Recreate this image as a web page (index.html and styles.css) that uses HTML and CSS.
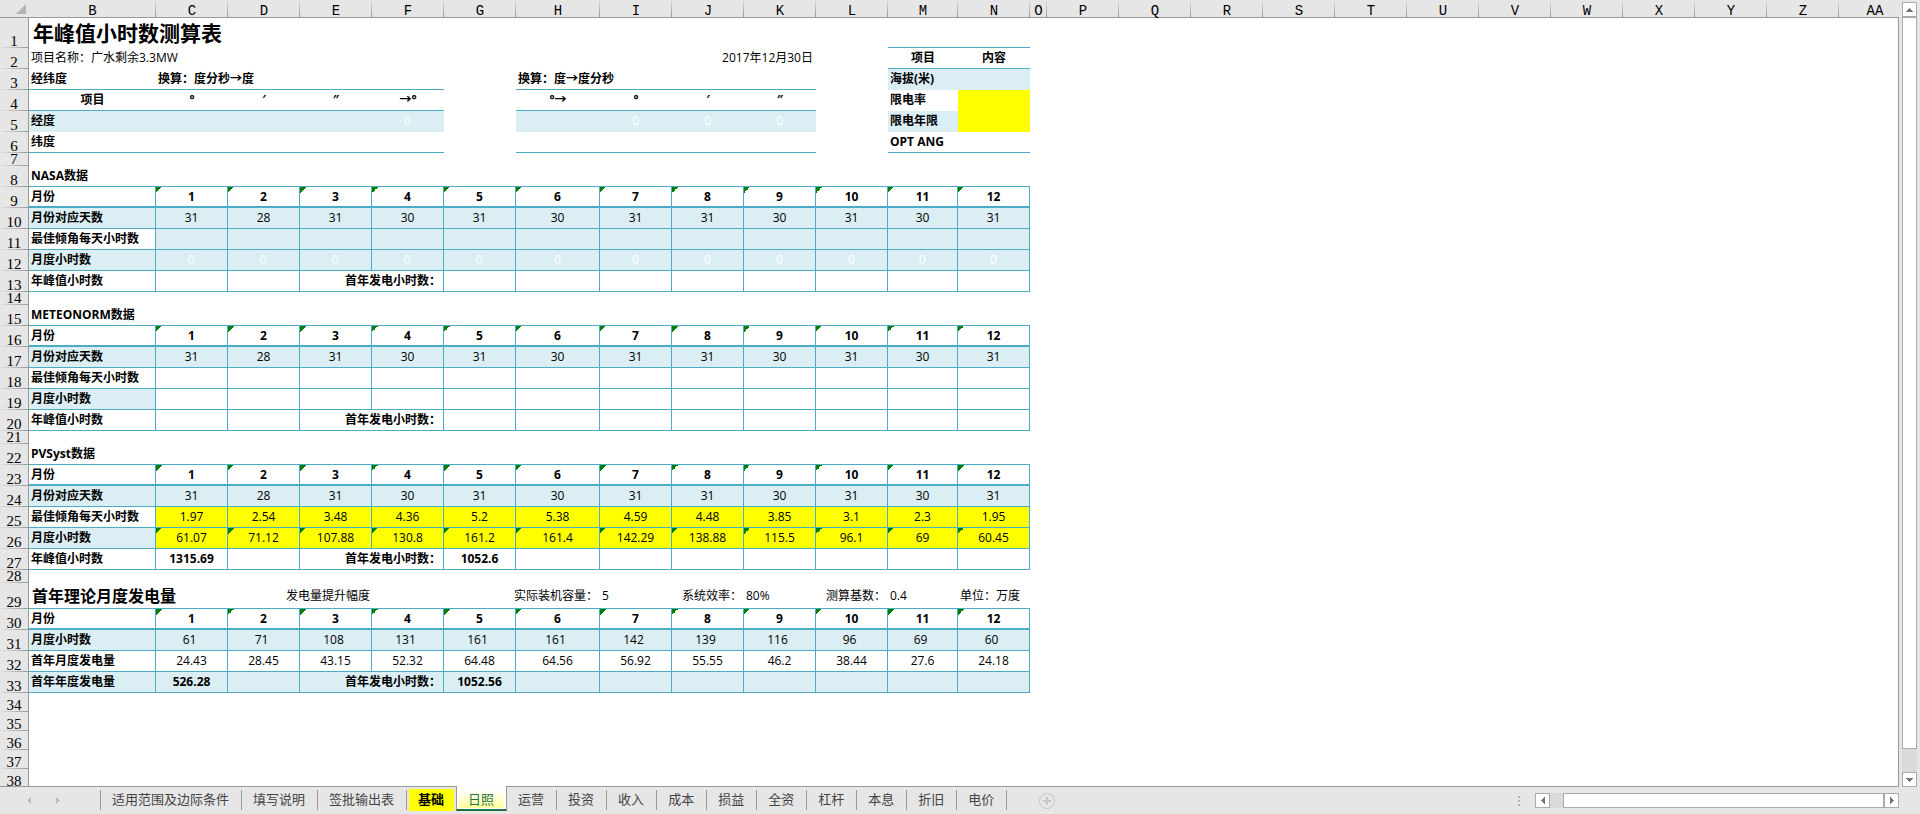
FILE: index.html
```html
<!DOCTYPE html>
<html lang="zh-CN">
<head>
    <meta charset="UTF-8">
    <meta name="viewport" content="width=device-width, initial-scale=1.0">
    <title>年峰值小时数测算表</title>
    <link rel="stylesheet" href="styles.css">
</head>
<body>
    <main class="workbook">
        <div class="sheet">
            <table class="grid">
                <colgroup id="cols"></colgroup>
                <thead><tr id="letters"></tr></thead>
                <tbody id="rows"></tbody>
            </table>
        </div>
        <div class="vscroll">
            <button class="scroll-btn" aria-label="向上滚动"><svg width="7" height="4" viewBox="0 0 7 4"><path d="M3 0h1v1h1v1h1v1h1v1H0V3h1V2h1V1h1z"/></svg></button>
            <div class="vtrack"><div class="vthumb"></div></div>
            <button class="scroll-btn" aria-label="向下滚动"><svg width="7" height="4" viewBox="0 0 7 4"><path d="M0 0h7v1H6v1H5v1H4v1H3V3H2V2H1V1H0z"/></svg></button>
        </div>
    </main>

    <footer class="tabbar">
        <div class="tab-nav">
            <button aria-label="上一个"><svg width="4" height="7" viewBox="0 0 4 7"><path d="M4 0v7L0 3.5z"/></svg></button>
            <button aria-label="下一个"><svg width="4" height="7" viewBox="0 0 4 7"><path d="M0 0v7l4-3.5z"/></svg></button>
        </div>
        <nav class="tabs">
            <button class="tab">适用范围及边际条件</button>
            <button class="tab">填写说明</button>
            <button class="tab">签批输出表</button>
            <button class="tab marked">基础</button>
            <button class="tab active"><span>日照</span></button>
            <button class="tab">运营</button>
            <button class="tab">投资</button>
            <button class="tab">收入</button>
            <button class="tab">成本</button>
            <button class="tab">损益</button>
            <button class="tab">全资</button>
            <button class="tab">杠杆</button>
            <button class="tab">本息</button>
            <button class="tab">折旧</button>
            <button class="tab">电价</button>
        </nav>
        <button class="add" aria-label="新工作表"><svg width="16" height="16" viewBox="0 0 16 16"><circle cx="8" cy="8" r="7.5"/><path d="M4 8h8M8 4v8" stroke-width="2"/></svg></button>
        <div class="hscroll">
            <svg class="grip" width="2" height="10" viewBox="0 0 2 10"><path d="M0 0h2v2H0zM0 4h2v2H0zM0 8h2v2H0z"/></svg>
            <button class="scroll-btn" aria-label="向左滚动"><svg width="4" height="7" viewBox="0 0 4 7"><path d="M4 0v7H3V6H2V5H1V4H0V3h1V2h1V1h1V0z"/></svg></button>
            <div class="htrack"><div class="hthumb"></div></div>
            <button class="scroll-btn" aria-label="向右滚动"><svg width="4" height="7" viewBox="0 0 4 7"><path d="M0 0v7h1V6h1V5h1V4h1V3H3V2H2V1H1V0z"/></svg></button>
        </div>
    </footer>

    <script src="script.js"></script>
</body>
</html>
```
FILE: styles.css
```css
* {
    margin: 0;
    padding: 0;
    box-sizing: border-box;
}

body {
    display: flex;
    flex-direction: column;
    height: 100vh;
    overflow: hidden;
    background: #e6e6e6;
    color: #000;
    font-family: "Open Sans", "Noto Sans CJK SC", sans-serif;
    font-size: 12px;
    line-height: 16px;
}

button {
    border: none;
    background: none;
    font: inherit;
    color: inherit;
    cursor: pointer;
}

.workbook {
    flex: 1;
    min-height: 0;
    display: flex;
}

/* sheet */
.sheet {
    flex: 1;
    min-width: 0;
    position: relative;
    overflow: hidden;
    background: #fff;
    border-bottom: 1px solid #999;
}

.sheet::after {
    content: "";
    position: absolute;
    top: 17px;
    right: 0;
    bottom: 0;
    border-right: 1px solid #999;
}

.grid {
    table-layout: fixed;
    width: 0;
    border-collapse: separate;
    border-spacing: 0;
}

.c-head { width: 29px; }
.c-b { width: 127px; }
.c-std { width: 72px; }
.c-h { width: 84px; }
.c-m { width: 70px; }
.c-o { width: 17px; }

.grid th {
    background: #e6e6e6;
    font-weight: normal;
    line-height: 12px;
    text-align: center;
}

.grid thead th {
    height: 18px;
    padding-top: 4px;
    border-bottom: 1px solid #999;
    background: linear-gradient(#e0e0e0, #999) right / 1px 100% no-repeat #e6e6e6;
    font-family: "Liberation Mono", monospace;
    font-size: 14px;
}

.grid thead .corner {
    padding: 0 3px 3px 0;
    background: #e6e6e6;
    text-align: right;
    vertical-align: bottom;
}

.corner svg {
    display: block;
    margin-left: auto;
    fill: #b4b4b4;
}

.grid tbody th {
    padding-bottom: 1px;
    border-right: 1px solid #999;
    background: linear-gradient(to right, #e0e0e0, #999) bottom / 100% 1px no-repeat #e6e6e6;
    font-family: "Liberation Serif", serif;
    font-size: 15px;
    vertical-align: bottom;
}

.grid td {
    padding: 0 2px;
    border-right: 1px solid transparent;
    border-bottom: 1px solid transparent;
    white-space: nowrap;
    vertical-align: middle;
}

.row { height: 21px; }
.row-title { height: 30px; }
.row-gap { height: 13px; }
.row-section { height: 26px; }
.row-empty { height: 19px; }

.grid .line { border-right: none; border-bottom-color: #4bacc6; }
.grid .box { border-color: #4bacc6; }
.grid .thick { border-bottom-width: 2px; }
.b { font-weight: bold; }
.c { text-align: center; }
.r { text-align: right; }
.grid .num { padding-right: 6px; text-align: center; }
.blue { background-color: #daeef3; }
.yellow { background-color: #ff0; }
.pale { color: #fff; }
.grid .title { padding-left: 4px; font-size: 21px; font-weight: bold; line-height: 24px; }
.grid .section { padding-left: 3px; font-size: 16px; font-weight: bold; line-height: 20px; }

/* green corner of a number stored as text */
.flag {
    background-image: linear-gradient(135deg, #008000 50%, transparent 50%);
    background-size: 6px 6px;
    background-repeat: no-repeat;
}

/* scrollbars */
.scroll-btn {
    flex: none;
    display: flex;
    align-items: center;
    justify-content: center;
    width: 15px;
    height: 15px;
    border: 1px solid #ababab;
    background: #fff;
}

.scroll-btn svg {
    fill: #777;
}

.vscroll {
    display: flex;
    flex-direction: column;
    width: 21px;
    padding: 2px 3px 0;
}

.vtrack {
    flex: 1;
    background: #dadada;
}

.vthumb {
    height: 97%;
    border: 1px solid #ababab;
    background: #fff;
}

.hscroll {
    display: flex;
    align-items: center;
    width: 402px;
    padding-right: 21px;
    margin-left: auto;
}

.grip {
    margin-right: 15px;
    fill: #b4b4b4;
}

.htrack {
    flex: 1;
    height: 15px;
    padding-left: 13px;
    background: #dadada;
}

.hthumb {
    height: 15px;
    border: 1px solid #ababab;
    background: #fff;
}

/* sheet tabs */
.tabbar {
    flex: none;
    display: flex;
    height: 27px;
}

.tab-nav {
    display: flex;
    align-items: center;
    gap: 25px;
    width: 101px;
    padding-left: 27px;
    border-right: 1px solid #999;
    margin: 3px 0 4px;
}

.tab-nav button {
    display: flex;
}

.tab-nav svg {
    fill: #bbb;
}

.tabs {
    display: flex;
    align-items: flex-start;
}

.tab {
    height: 20px;
    margin-top: 3px;
    padding: 0 12px 2px 11px;
    border-right: 1px solid #999;
    color: #444;
    font-size: 13px;
    line-height: 18px;
    white-space: nowrap;
}

.marked {
    height: 22px;
    margin: 2px 2px 0;
    padding: 0 10px 2px 9px;
    border: none;
    background: #ff0;
    color: #000;
    font-weight: bold;
}

.active {
    position: relative;
    height: 25px;
    margin-top: -1px;
    padding: 4px 2px 1px;
    border: 1px solid #999;
    border-width: 0 1px 2px;
    border-bottom-color: #217346;
    background: #fff;
    color: #217346;
}

.active span {
    display: block;
    padding: 0 10px 0 9px;
    background: linear-gradient(#fff, #ffff99);
}

.add {
    display: flex;
    align-items: center;
    margin-left: 32px;
}

.add svg {
    fill: none;
    stroke: #c6c6c6;
}
```
FILE: script.js
```js
const letters = 'B C D E F G H I J K L M N O P Q R S T U V W X Y Z AA'.split(' ');
const widths = { B: 'c-b', H: 'c-h', M: 'c-m', O: 'c-o' };
const months = ['1', '2', '3', '4', '5', '6', '7', '8', '9', '10', '11', '12'];
const days = [31, 28, 31, 30, 31, 30, 31, 31, 30, 31, 30, 31];
const empty = Array(12).fill('');

// a cell is [text, classes, colspan]
const line = (label, values, labelCls, cls) =>
    [[label, 'b box ' + labelCls], ...values.map(v => [v, 'box ' + cls])];

const monthRow = () => line('月份', months, 'thick', 'b c thick flag');

const totalRow = (label, total, hours, cls) => [
    [label, 'b box ' + cls],
    [total, 'b c box ' + cls],
    ['', 'box ' + cls],
    ['首年发电小时数：', 'b r box ' + cls, 2],
    [hours, 'b c box ' + cls],
    ...Array(7).fill(['', 'box ' + cls])
];

const gap = { h: 'row-gap', cells: [] };
const heading = text => [[text, 'b line', 13]];

const rows = [
    { h: 'row-title', cells: [['年峰值小时数测算表', 'title', 11], ['', 'line', 2]] },
    [['项目名称：广水剩余3.3MW', '', 7], ['2017年12月30日', 'r', 3], ['', ''], ['项目', 'b c line'], ['内容', 'b c line']],
    [['经纬度', 'b line'], ['换算：度分秒→度', 'b line', 4], ['', ''], ['换算：度→度分秒', 'b line', 4], ['', ''], ['海拔(米)', 'b blue'], ['', 'blue']],
    [['项目', 'b c line'], ['°', 'b c line'], ['′', 'b c line'], ['″', 'b c line'], ['→°', 'b c line'], ['', ''],
        ['°→', 'b c line'], ['°', 'b c line'], ['′', 'b c line'], ['″', 'b c line'], ['', ''], ['限电率', 'b'], ['', 'yellow']],
    [['经度', 'b blue'], ['', 'blue', 3], ['0', 'c blue pale'], ['', ''],
        ['', 'blue'], ['0', 'c blue pale'], ['0', 'c blue pale'], ['0', 'c blue pale'], ['', ''], ['限电年限', 'b blue'], ['', 'yellow']],
    [['纬度', 'b line'], ['', 'line', 4], ['', ''], ['', 'line', 4], ['', ''], ['OPT ANG', 'b line'], ['', 'line']],
    gap,

    heading('NASA数据'),
    monthRow(),
    line('月份对应天数', days, 'blue', 'c blue'),
    line('最佳倾角每天小时数', empty, '', 'blue'),
    line('月度小时数', Array(12).fill('0'), 'blue', 'c blue pale'),
    totalRow('年峰值小时数', '', '', ''),
    gap,

    heading('METEONORM数据'),
    monthRow(),
    line('月份对应天数', days, 'blue', 'c blue'),
    line('最佳倾角每天小时数', empty, '', ''),
    line('月度小时数', empty, 'blue', ''),
    totalRow('年峰值小时数', '', '', ''),
    gap,

    heading('PVSyst数据'),
    monthRow(),
    line('月份对应天数', days, 'blue', 'c blue'),
    line('最佳倾角每天小时数', [1.97, 2.54, 3.48, 4.36, 5.2, 5.38, 4.59, 4.48, 3.85, 3.1, 2.3, 1.95], '', 'c yellow'),
    line('月度小时数', [61.07, 71.12, 107.88, 130.8, 161.2, 161.4, 142.29, 138.88, 115.5, 96.1, 69, 60.45], 'blue', 'c yellow flag'),
    totalRow('年峰值小时数', '1315.69', '1052.6', ''),
    gap,

    { h: 'row-section', cells: [
        ['首年理论月度发电量', 'section line', 2], ['发电量提升幅度', 'r line', 2], ['', 'line'],
        ['实际装机容量：', 'r line', 2], ['5', 'line'], ['系统效率：', 'r line'], ['80%', 'line'],
        ['测算基数：', 'r line'], ['0.4', 'line'], ['单位：万度', 'line']
    ] },
    monthRow(),
    line('月度小时数', [61, 71, 108, 131, 161, 161, 142, 139, 116, 96, 69, 60], 'blue', 'num blue'),
    line('首年月度发电量', [24.43, 28.45, 43.15, 52.32, 64.48, 64.56, 56.92, 55.55, 46.2, 38.44, 27.6, 24.18], '', 'c'),
    totalRow('首年年度发电量', '526.28', '1052.56', 'blue'),
    ...Array(5).fill({ h: 'row-empty', cells: [] })
];

document.getElementById('cols').innerHTML = '<col class="c-head">' +
    letters.map(l => `<col class="${widths[l] || 'c-std'}">`).join('');

document.getElementById('letters').innerHTML =
    '<th class="corner"><svg width="10" height="10" viewBox="0 0 10 10"><path d="M10 0v10H0z"/></svg></th>' +
    letters.map(l => `<th scope="col">${l}</th>`).join('');

document.getElementById('rows').innerHTML = rows.map((row, i) => {
    const cells = row.cells || row;
    const used = cells.reduce((sum, cell) => sum + (cell[2] || 1), 0);
    const tds = cells.map(([text, cls, span]) => `<td class="${cls}" colspan="${span || 1}">${text}</td>`).join('');
    return `<tr class="${row.h || 'row'}"><th scope="row">${i + 1}</th>${tds}<td colspan="${letters.length - used}"></td></tr>`;
}).join('');
```
